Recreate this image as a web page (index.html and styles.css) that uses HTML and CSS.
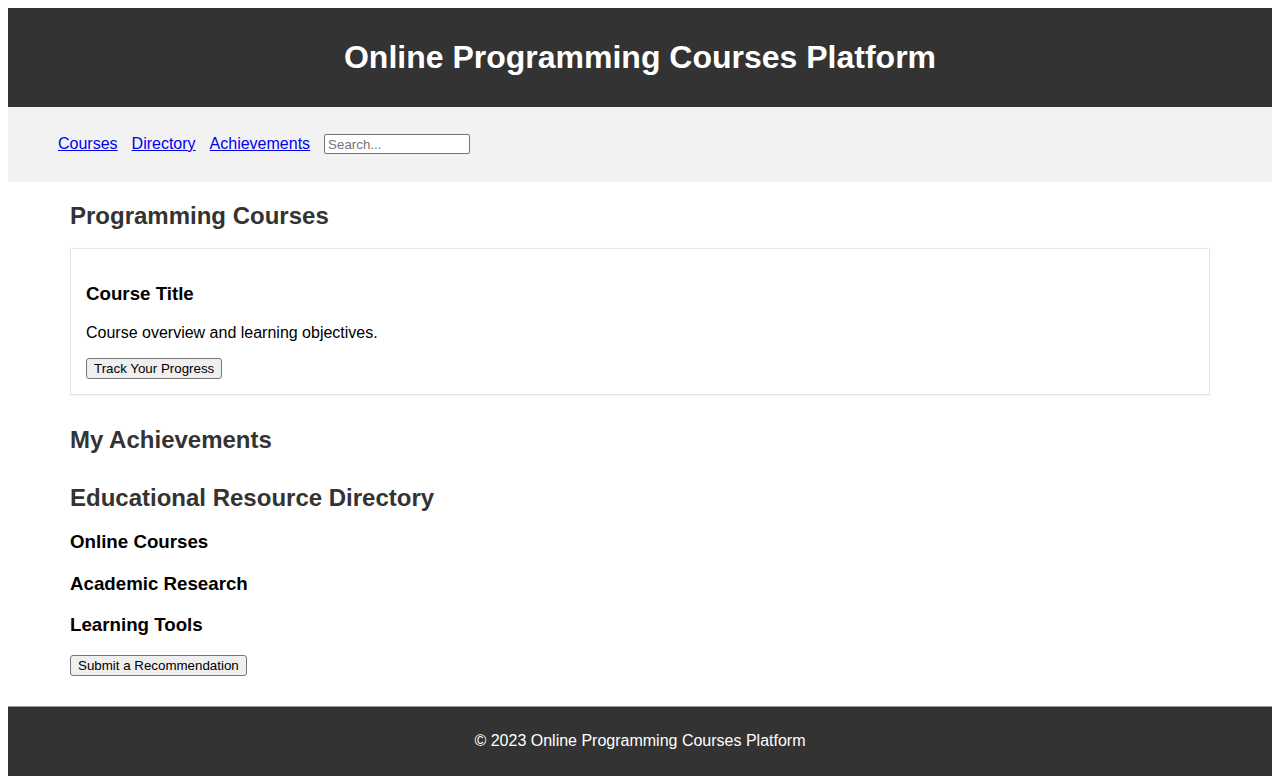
FILE: index.html
```html
<!DOCTYPE html>
<html lang="en">
<head>
<meta charset="utf-8">
<title>Online Programming Courses Platform</title>
<link rel="stylesheet" href="styles.css">
</head>
<body>
<header class="site-header">
  <h1 class="site-title">Online Programming Courses Platform</h1>
</header>
<nav class="site-nav">
  <ul class="nav-list">
    <li class="nav-item"><a href="#courses">Courses</a></li>
    <li class="nav-item"><a href="#directory">Directory</a></li>
    <li class="nav-item"><a href="#achievements">Achievements</a></li>
    <li class="nav-item"><input class="search" type="text" placeholder="Search..."></li>
  </ul>
</nav>
<main class="main">
  <section class="section" id="courses">
    <h2 class="section-title">Programming Courses</h2>
    <div class="course-card">
      <h3 class="course-title">Course Title</h3>
      <p class="course-text">Course overview and learning objectives.</p>
      <button class="btn">Track Your Progress</button>
    </div>
  </section>
  <section class="section" id="achievements">
    <h2 class="section-title">My Achievements</h2>
  </section>
  <section class="section" id="directory">
    <h2 class="section-title">Educational Resource Directory</h2>
    <div class="category"><h3 class="cat-title">Online Courses</h3></div>
    <div class="category"><h3 class="cat-title">Academic Research</h3></div>
    <div class="category"><h3 class="cat-title">Learning Tools</h3></div>
    <button class="btn">Submit a Recommendation</button>
  </section>
</main>
<footer class="site-footer">
  <p class="footer-text">&copy; 2023 Online Programming Courses Platform</p>
</footer>
</body>
</html>
```

FILE: styles.css
```css
body {
  margin: 8px;
  font-family: "Liberation Sans", Arial, sans-serif;
  font-size: 16px;
  color: #000;
  background: #fff;
}

.site-header {
  background: #333;
  color: #fff;
  padding: 10px;
  text-align: center;
}

.site-title {
  font-size: 32px;
  margin: 21px 0;
  line-height: 37px;
}

.site-nav {
  background: #f2f2f2;
  padding: 10px;
}

.nav-list {
  list-style: none;
  margin: 16px 0;
  padding: 0 0 0 40px;
  display: flex;
  align-items: flex-start;
  gap: 14px;
  height: 23px;
}

.nav-item a {
  display: block;
  color: #0000ee;
  line-height: 18px;
  padding-top: 2px;
}

.search {
  display: block;
  box-sizing: border-box;
  font-family: "Liberation Sans", Arial, sans-serif;
  font-size: 13.33px;
  width: 146px;
  height: 20px;
  padding: 1px 3px;
  border: 1px solid #767676;
  border-radius: 2px;
  margin-top: 1px;
  background: #fff;
}

.main {
  max-width: 1140px;
  margin: 0 auto;
}

.section {
  margin-bottom: 30px;
}

.section-title {
  color: #333;
  font-size: 24px;
  line-height: 28px;
  margin: 20px 0 18px;
}

.course-card {
  border: 1px solid #e6e6e6;
  padding: 15px;
  margin-bottom: 31px;
  box-shadow: 0 1px 2px rgba(0, 0, 0, 0.06);
}

.course-title,
.cat-title {
  font-size: 18.72px;
  line-height: 22px;
  margin: 18.72px 0;
}

.cat-title {
  margin: 19.4px 0;
}

.course-title {
  margin-top: 19px;
}

.course-text {
  margin: 16px 0;
}

.btn {
  display: block;
  font-family: "Liberation Sans", Arial, sans-serif;
  font-size: 13.33px;
  line-height: 15px;
  padding: 2px 7px;
  border: 1px solid #767676;
  border-radius: 3px;
  background: #efefef;
  color: #000;
}

.site-footer {
  background: #333;
  color: #fff;
  text-align: center;
  padding: 10px;
  border-top: 1px solid #999;
}

.footer-text {
  margin: 15px 0 16px;
}
```
